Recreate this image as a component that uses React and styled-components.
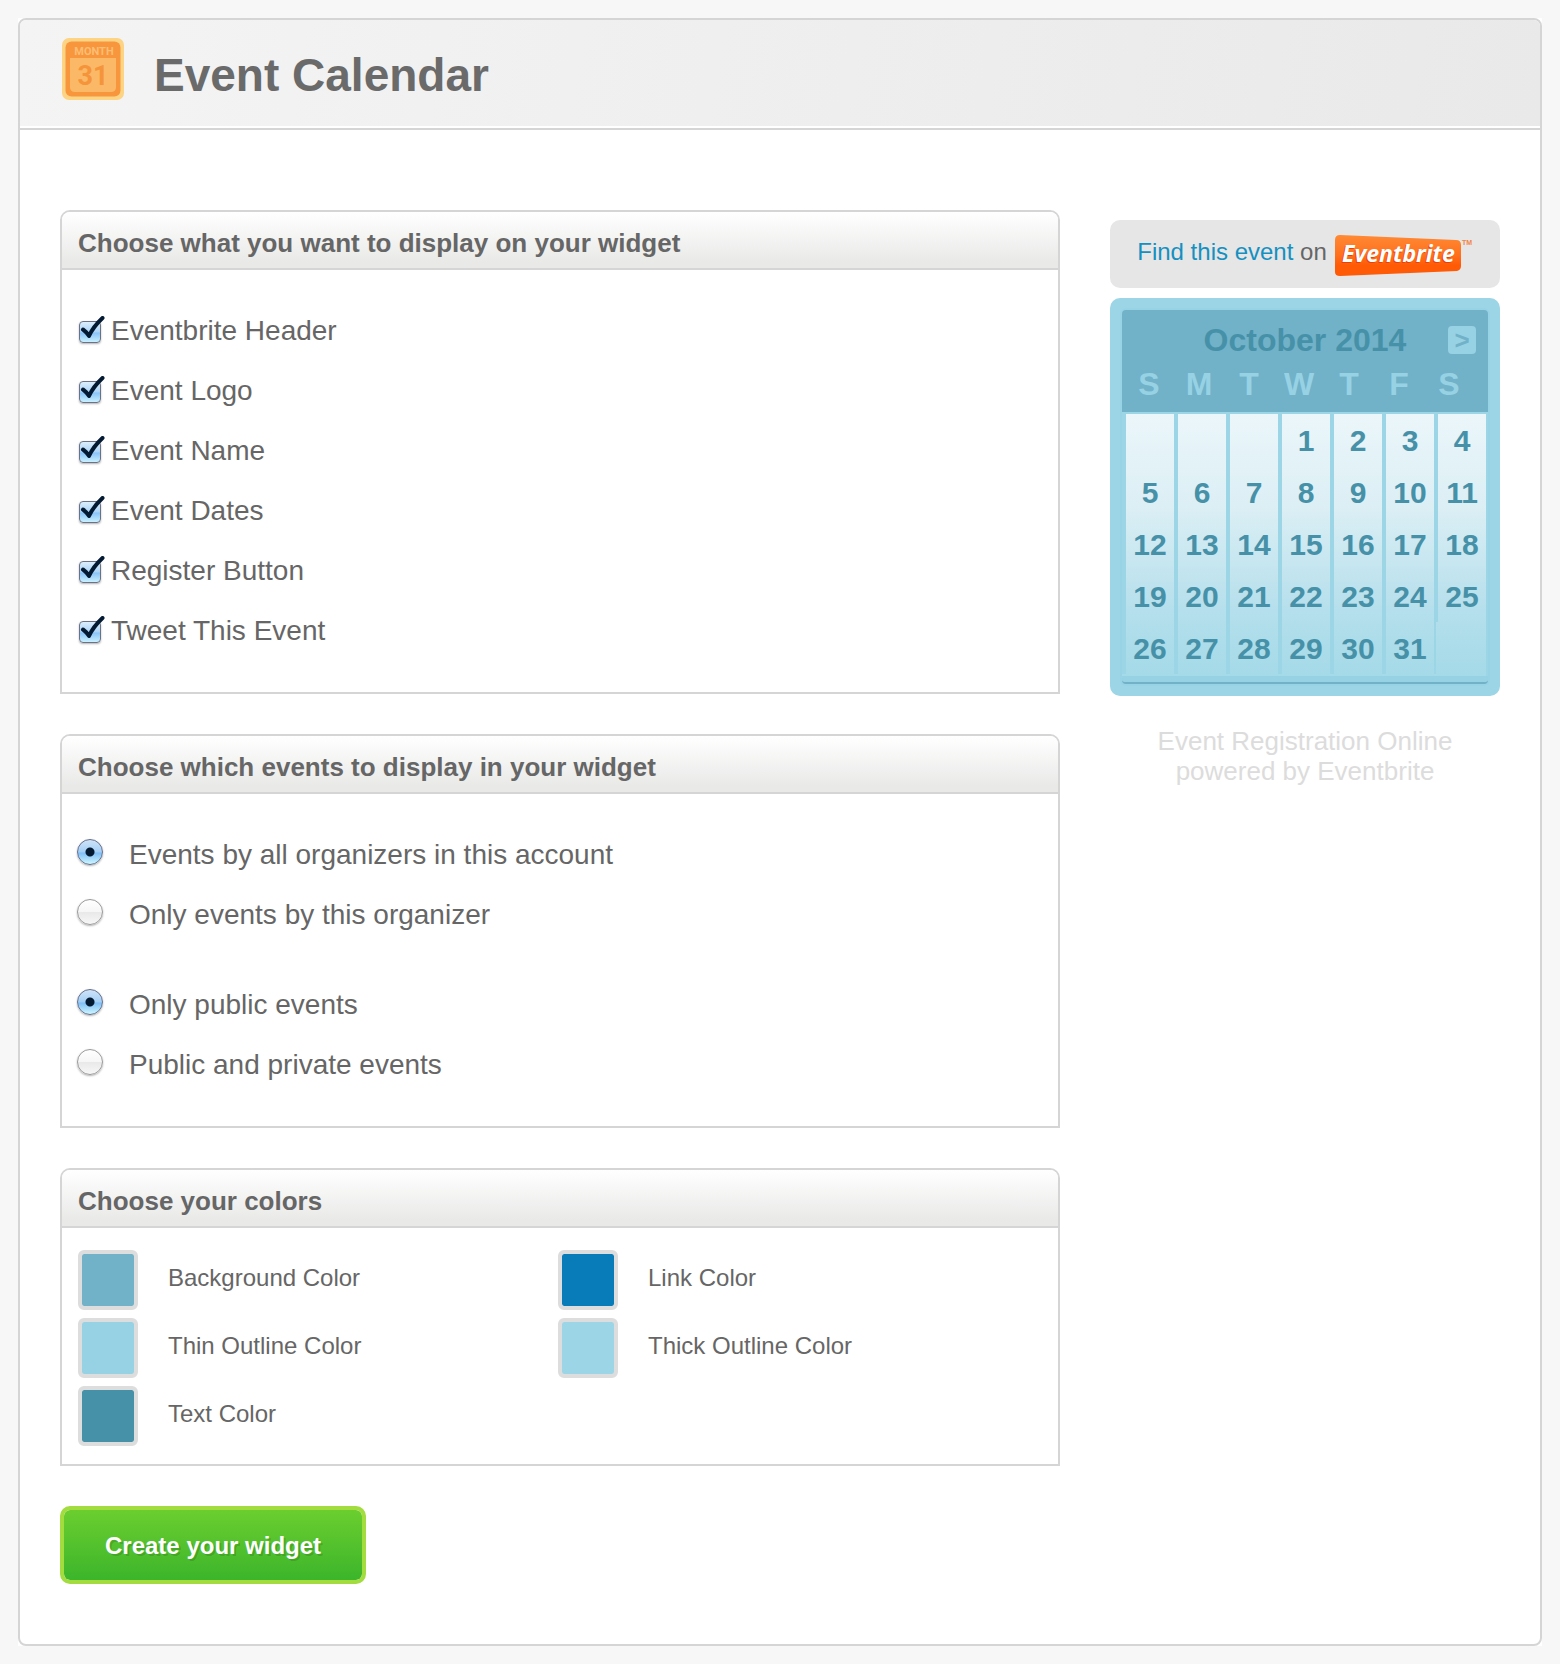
import React, { useState } from "react";
import styled, { createGlobalStyle } from "styled-components";

const displayOptions = [
  "Eventbrite Header",
  "Event Logo",
  "Event Name",
  "Event Dates",
  "Register Button",
  "Tweet This Event",
];

const organizerOptions = [
  "Events by all organizers in this account",
  "Only events by this organizer",
];

const privacyOptions = ["Only public events", "Public and private events"];

const colorOptions = [
  { id: "background", label: "Background Color", value: "#71b2c8" },
  { id: "link", label: "Link Color", value: "#077cb8" },
  { id: "thin", label: "Thin Outline Color", value: "#97d1e4" },
  { id: "thick", label: "Thick Outline Color", value: "#9cd5e6" },
  { id: "text", label: "Text Color", value: "#4691a8" },
];

const weekdays = ["S", "M", "T", "W", "T", "F", "S"];

// October 2014 starts on a Wednesday
const weeks = [0, 1, 2, 3, 4].map((week) =>
  weekdays.map((_, i) => {
    const day = week * 7 + i - 2;
    return day > 0 && day < 32 ? day : null;
  })
);

const CalendarIcon = () => (
  <svg width="62" height="62" viewBox="0 0 62 62" aria-hidden="true">
    <rect width="62" height="62" rx="7" fill="#fdd484" />
    <rect x="3.5" y="3.5" width="55" height="55" rx="6" fill="#f7963c" />
    <path d="M8 20H54V49Q54 54 49 54H13Q8 54 8 49Z" fill="#fbb967" />
    <IconText x="32" y="17" fontSize="11" fill="#fdbd72">
      MONTH
    </IconText>
    <IconText x="31" y="47" fontSize="27" fill="#f5943a">
      31
    </IconText>
  </svg>
);

const EventbriteLogo = () => (
  <svg width="138" height="44" viewBox="0 0 138 44" role="img">
    <defs>
      <linearGradient id="logoFill" x1="0" y1="0" x2="0" y2="1">
        <stop offset="0" stopColor="#ff8a35" />
        <stop offset="0.5" stopColor="#ff6f1c" />
        <stop offset="0.75" stopColor="#ff5a05" />
        <stop offset="1" stopColor="#ff5a05" />
      </linearGradient>
    </defs>
    <path
      d="M5 2L121 7Q126 7 126 12V33Q126 37 122 38L5 43Q0 43 0 39V7Q0 2 5 2Z"
      fill="url(#logoFill)"
    />
    <LogoText x="6" y="30" fill="#e8400a">
      Eventbrite
    </LogoText>
    <LogoText x="7" y="29" fill="#ffffff">
      Eventbrite
    </LogoText>
    <TradeMark x="127" y="12">
      TM
    </TradeMark>
  </svg>
);

const CheckOption = ({ label }) => (
  <Option $gap="9px">
    <CheckBox>
      <input type="checkbox" defaultChecked />
      <svg width="28" height="28" viewBox="0 0 28 28" aria-hidden="true">
        <path
          d="M5 13.5Q8 15.5 11 20Q15 11 24.5 2"
          fill="none"
          stroke="#041a33"
          strokeWidth="4"
          strokeLinecap="round"
          strokeLinejoin="round"
        />
      </svg>
    </CheckBox>
    {label}
  </Option>
);

const RadioGroup = ({ name, label, options }) => (
  <Group role="radiogroup" aria-label={label}>
    {options.map((option, i) => (
      <Option key={option} $gap="26px">
        <Radio type="radio" name={name} defaultChecked={i === 0} />
        {option}
      </Option>
    ))}
  </Group>
);

const Widget = () => (
  <WidgetColumn>
    <Banner>
      <span>
        <a href="#event">Find this event</a> on
      </span>
      <EventbriteLogo />
    </Banner>

    <Calendar>
      <CalendarInner>
        <CalendarHead>
          <Month>October 2014</Month>
          <Next type="button">&gt;</Next>
          <Weekdays>
            {weekdays.map((day, i) => (
              <span key={i}>{day}</span>
            ))}
          </Weekdays>
        </CalendarHead>
        <Days>
          <tbody>
            {weeks.map((week, i) => (
              <tr key={i}>
                {week.map((day, j) => (
                  <Day key={j} $last={i === 4 && !day}>
                    {day}
                  </Day>
                ))}
              </tr>
            ))}
          </tbody>
        </Days>
      </CalendarInner>
    </Calendar>

    <Powered>
      Event Registration Online
      <br />
      powered by Eventbrite
    </Powered>
  </WidgetColumn>
);

const App = () => {
  const [colors, setColors] = useState(colorOptions);

  const changeColor = (id, value) =>
    setColors(colors.map((c) => (c.id === id ? { ...c, value } : c)));

  return (
    <Page>
      <GlobalStyle />
      <Backdrop>
        <Frame>
          <Header>
            <CalendarIcon />
            <Title>Event Calendar</Title>
          </Header>

          <Content>
            <Form onSubmit={(e) => e.preventDefault()}>
              <Panel>
                <PanelTitle>
                  Choose what you want to display on your widget
                </PanelTitle>
                <Options>
                  {displayOptions.map((label) => (
                    <CheckOption key={label} label={label} />
                  ))}
                </Options>
              </Panel>

              <Panel>
                <PanelTitle>
                  Choose which events to display in your widget
                </PanelTitle>
                <Options>
                  <RadioGroup
                    name="organizer"
                    label="Organizer"
                    options={organizerOptions}
                  />
                  <RadioGroup
                    name="privacy"
                    label="Privacy"
                    options={privacyOptions}
                  />
                </Options>
              </Panel>

              <Panel>
                <PanelTitle>Choose your colors</PanelTitle>
                <Colors>
                  {colors.map(({ id, label, value }) => (
                    <ColorOption key={id}>
                      <Swatch
                        type="color"
                        value={value}
                        onChange={(e) => changeColor(id, e.target.value)}
                      />
                      <span>{label}</span>
                    </ColorOption>
                  ))}
                </Colors>
              </Panel>

              <Submit type="submit">Create your widget</Submit>
            </Form>

            <Widget />
          </Content>
        </Frame>
      </Backdrop>
    </Page>
  );
};

export default App;

const GlobalStyle = createGlobalStyle`
  * {
    box-sizing: border-box;
  }

  body {
    margin: 0;
    background: #f7f7f7;
    color: #666666;
    font-family: "Liberation Sans", Arial, Helvetica, sans-serif;
  }
`;

const Page = styled.main`
  padding: 18px;
`;

const Backdrop = styled.div`
  background: #ffffff;
`;

const Frame = styled.div`
  border: 2px solid #d5d5d5;
  border-radius: 8px;
  overflow: hidden;
`;

const Header = styled.header`
  display: flex;
  align-items: flex-start;
  gap: 30px;
  padding: 18px 42px 26px;
  background: linear-gradient(100deg, #f4f4f4, #e9e9e9);
  border-bottom: 2px solid #ffffff;
`;

const Title = styled.h1`
  margin: 0;
  padding-top: 12px;
  font-size: 46px;
  line-height: 50px;
  color: #6a6a6a;
`;

const IconText = styled.text`
  font-family: Roboto, sans-serif;
  font-weight: bold;
  text-anchor: middle;
`;

const Content = styled.div`
  display: flex;
  align-items: flex-start;
  gap: 50px;
  padding: 80px 40px 60px;
  border-top: 2px solid #d5d5d5;
`;

const Form = styled.form`
  display: flex;
  flex-direction: column;
  align-items: flex-start;
  gap: 40px;
  flex: 1;
`;

const Panel = styled.section`
  width: 100%;
  border: 2px solid #d5d5d5;
  border-radius: 10px 10px 0 0;
`;

const PanelTitle = styled.h2`
  margin: 0;
  padding: 16px 16px 10px;
  font-size: 26px;
  line-height: 30px;
  border-bottom: 2px solid #d5d5d5;
  border-radius: 8px 8px 0 0;
  background: linear-gradient(#ffffff, #e9e9e8 90%);
`;

const Options = styled.div`
  display: flex;
  flex-direction: column;
  gap: 30px;
  padding: 30px 16px 32px;

  > label + label {
    margin-top: -30px;
  }
`;

const Group = styled.div`
  display: flex;
  flex-direction: column;
`;

const Option = styled.label`
  display: flex;
  align-items: center;
  gap: ${({ $gap }) => $gap};
  height: 60px;
  padding-top: 2px;
  font-size: 28px;
`;

const CheckBox = styled.span`
  position: relative;
  display: flex;
  align-items: flex-end;
  width: 24px;
  height: 28px;
  margin-bottom: 2px;

  input {
    appearance: none;
    width: 22px;
    height: 22px;
    margin: 1px;
    border: 1px solid #6c7286;
    border-radius: 4px;
    background: linear-gradient(#dceefc, #a9d3f8 50%, #8ac4f8 55%, #c9f0ff);
    box-shadow: 0 1px 2px rgba(0, 0, 0, 0.3);
  }

  svg {
    position: absolute;
    top: 0;
    left: 0;
    pointer-events: none;
    visibility: hidden;
  }

  input:checked + svg {
    visibility: visible;
  }
`;

const Radio = styled.input`
  appearance: none;
  width: 26px;
  height: 26px;
  margin: 0 0 6px -1px;
  border: 1px solid #999999;
  border-radius: 50%;
  background: linear-gradient(#ffffff, #f6f6f6 50%, #e9e9e9 52%, #f7f7f7);
  box-shadow: 0 1px 2px rgba(0, 0, 0, 0.3);

  &:checked {
    border-color: #646e8c;
    background: radial-gradient(circle, #041a33 4px, transparent 5px),
      linear-gradient(#cfe3f8, #a3cff6 50%, #7fbff8 54%, #cdf6ff);
  }
`;

const Colors = styled.div`
  display: grid;
  grid-template-columns: 1fr 1fr;
  row-gap: 8px;
  padding: 22px 20px 18px 16px;
`;

const ColorOption = styled.label`
  display: flex;
  align-items: center;
  gap: 30px;
  font-size: 24px;

  span {
    padding-bottom: 4px;
  }
`;

const Swatch = styled.input`
  appearance: none;
  width: 60px;
  height: 60px;
  padding: 0;
  border: 4px solid #dddddd;
  border-radius: 6px;
  background: #dddddd;

  &::-webkit-color-swatch-wrapper {
    padding: 0;
  }

  &::-webkit-color-swatch {
    border: none;
    border-radius: 2px;
  }
`;

const Submit = styled.button`
  height: 78px;
  padding: 2px 41px 0;
  border: 4px solid #a2dc3f;
  border-radius: 10px;
  background: linear-gradient(#6bce2f, #3cb52b) padding-box;
  color: #ffffff;
  font-family: inherit;
  font-size: 24px;
  font-weight: bold;
  text-shadow: 2px 2px 0 rgba(0, 0, 0, 0.15);
`;

const WidgetColumn = styled.aside`
  width: 390px;
  padding-top: 10px;
`;

const Banner = styled.div`
  display: flex;
  justify-content: center;
  gap: 8px;
  padding: 12px 0;
  border-radius: 10px;
  background: #e6e6e6;
  font-size: 24px;
  line-height: 40px;

  svg {
    margin-top: 1px;
    margin-bottom: -1px;
  }

  a {
    color: #1590c0;
    text-decoration: none;
  }
`;

const LogoText = styled.text`
  font-family: "Open Sans", sans-serif;
  font-size: 23px;
  font-weight: bold;
  font-style: italic;
`;

const TradeMark = styled.text`
  font-size: 7px;
  font-weight: bold;
  fill: #f58345;
`;

const Calendar = styled.section`
  margin-top: 10px;
  padding: 12px;
  border-radius: 10px;
  background: #9cd5e6;
`;

const CalendarInner = styled.div`
  padding-bottom: 6px;
  border-bottom: 2px solid #71b2c8;
  border-radius: 4px;
  background: #97d1e4;
  box-shadow: 0 0 0 2px #98d2e5;
`;

const CalendarHead = styled.div`
  display: grid;
  grid-template-columns: 28px 1fr 28px;
  align-items: center;
  row-gap: 8px;
  padding: 12px 12px 10px;
  border-radius: 4px 4px 0 0;
  background: #71b2c8;
  font-size: 32px;
  font-weight: bold;
`;

const Month = styled.h3`
  grid-column: 2;
  margin: 0;
  font-size: 32px;
  line-height: 36px;
  text-align: center;
  color: #4691a8;
`;

const Next = styled.button`
  height: 28px;
  padding: 0;
  border: none;
  border-radius: 4px;
  background: #97d1e4;
  color: #71b2c8;
  font-family: inherit;
  font-size: 26px;
  font-weight: bold;
  line-height: 26px;
`;

const Weekdays = styled.div`
  grid-column: 1 / -1;
  display: grid;
  grid-template-columns: repeat(7, 50px);
  margin-left: -10px;
  line-height: 36px;
  text-align: center;
  color: #97d1e4;
`;

const Days = styled.table`
  width: 100%;
  table-layout: fixed;
  border-spacing: 0;
  border-top: 2px solid #9cd5e6;
  border-right: 2px solid #9cd5e6;
  padding-bottom: 2px;
  background: linear-gradient(#ebf6fa, #dceff5 35%, #b5dfec 75%, #a5dae8)
    padding-box;
`;

const Day = styled.td`
  height: 52px;
  padding: 2px 0 0;
  border-left: ${({ $last }) => ($last ? "2px" : "4px")} solid #9cd5e6;
  font-size: 30px;
  font-weight: bold;
  text-align: center;
  color: #4691a8;
`;

const Powered = styled.p`
  margin: 30px 0 0;
  font-size: 26px;
  line-height: 30px;
  text-align: center;
  color: #dcdcdc;
`;
